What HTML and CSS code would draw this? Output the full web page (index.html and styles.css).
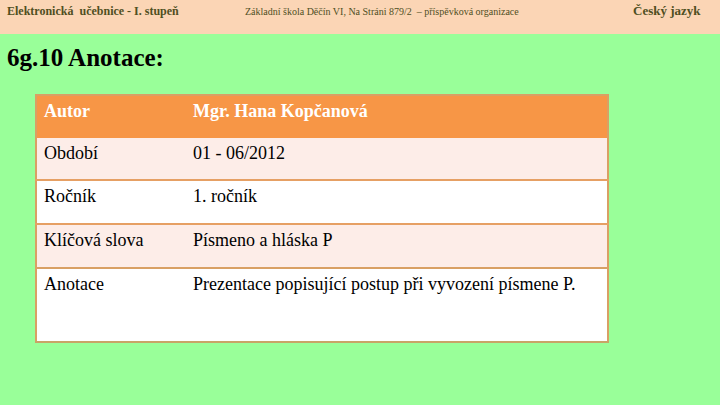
FILE: index.html
```html
<!DOCTYPE html>
<html lang="cs">
<head>
<meta charset="utf-8">
<link rel="stylesheet" href="styles.css">
</head>
<body>
<header class="topbar">
  <span class="tb-left">Elektronická&nbsp; učebnice - I. stupeň</span>
  <span class="tb-mid">Základní škola Děčín VI, Na Stráni 879/2 &nbsp;– příspěvková organizace</span>
  <span class="tb-right">Český jazyk</span>
</header>
<main class="content">
  <h1 class="title">6g.10 Anotace:</h1>
  <table class="anot">
    <tr class="head"><td class="c1">Autor</td><td class="c2">Mgr. Hana Kopčanová</td></tr>
    <tr class="odd first"><td class="c1">Období</td><td class="c2">01 - 06/2012</td></tr>
    <tr class="even"><td class="c1">Ročník</td><td class="c2">1. ročník</td></tr>
    <tr class="odd"><td class="c1">Klíčová slova</td><td class="c2">Písmeno a hláska P</td></tr>
    <tr class="even last"><td class="c1">Anotace</td><td class="c2">Prezentace popisující postup při vyvození písmene P.</td></tr>
  </table>
</main>
</body>
</html>
```
FILE: styles.css
```css
html, body {
  margin: 0;
  padding: 0;
}
body {
  width: 720px;
  height: 405px;
  background: #99ff99;
  font-family: "Liberation Serif", "Times New Roman", serif;
  overflow: hidden;
}
.topbar {
  height: 34px;
  background: #fbd5b5;
  display: flex;
  align-items: flex-start;
  padding: 4px 0 0 7px;
  box-sizing: border-box;
  color: #4f4f1f;
}
.tb-left {
  font-weight: bold;
  font-size: 12px;
  width: 238px;
}
.tb-mid {
  font-size: 10px;
  padding-top: 2px;
  width: 388px;
}
.tb-right {
  font-weight: bold;
  font-size: 13px;
  margin-top: -1px;
}
.content {
  padding: 9px 0 0 7px;
}
.title {
  margin: 0;
  font-family: "Liberation Serif", "Times New Roman", serif;
  font-size: 25px;
  font-weight: bold;
  color: #000;
  line-height: 30px;
}
.anot {
  margin: 21px 0 0 28px;
  width: 574px;
  border-collapse: collapse;
  border: 2px solid #d9a064;
  font-family: "Liberation Serif", "Times New Roman", serif;
  font-size: 18px;
  color: #000;
}
.anot td {
  font-family: "Liberation Serif", "Times New Roman", serif;
  vertical-align: top;
  padding: 5px 7px 0 7px;
  box-sizing: border-box;
}
.anot tr {
  height: 44px;
  border-top: 2px solid #e6a064;
}
.anot .c1 {
  width: 150px;
}
.anot .head {
  background: #f79646;
  color: #fff;
  font-weight: bold;
  height: 43px;
  border-top: none;
}
.anot .first {
  border-top: none;
  height: 42px;
}
.anot .odd {
  background: #fdede8;
}
.anot .even {
  background: #ffffff;
}
.anot .last {
  height: 74px;
  border-top-color: #d9a064;
}
.anot .last td {
  border-bottom: 2px solid #c9a466;
}
```
